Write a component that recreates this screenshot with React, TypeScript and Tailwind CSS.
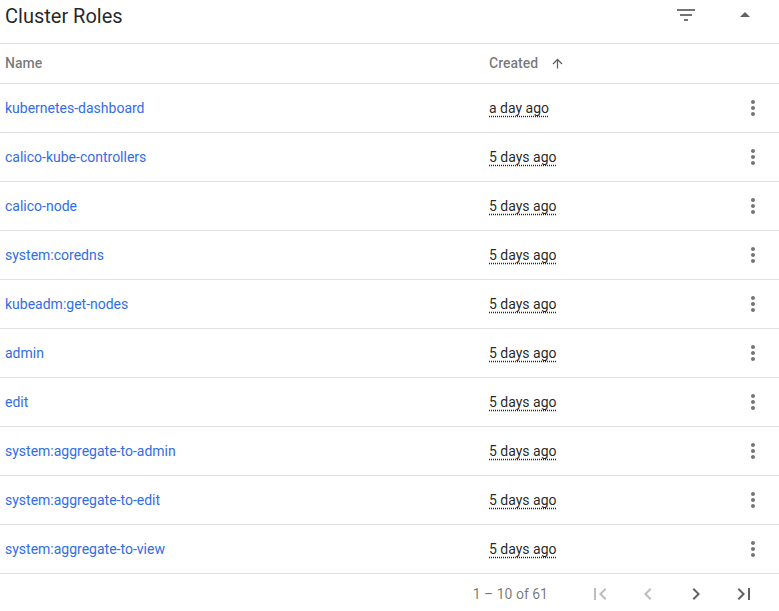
const ROWS = [
  { name: "kubernetes-dashboard", created: "a day ago" },
  { name: "calico-kube-controllers", created: "5 days ago" },
  { name: "calico-node", created: "5 days ago" },
  { name: "system:coredns", created: "5 days ago" },
  { name: "kubeadm:get-nodes", created: "5 days ago" },
  { name: "admin", created: "5 days ago" },
  { name: "edit", created: "5 days ago" },
  { name: "system:aggregate-to-admin", created: "5 days ago" },
  { name: "system:aggregate-to-edit", created: "5 days ago" },
  { name: "system:aggregate-to-view", created: "5 days ago" },
];

// material icon paths
const ICONS = {
  first: "M18.41 16.59L13.82 12l4.59-4.59L17 6l-6 6 6 6zM6 6h2v12H6z",
  prev: "M15.41 7.41L14 6l-6 6 6 6 1.41-1.41L10.83 12z",
  next: "M10 6L8.59 7.41 13.17 12l-4.58 4.59L10 18l6-6z",
  last: "M5.59 7.41L10.18 12l-4.59 4.59L7 18l6-6-6-6zM16 6h2v12h-2z",
};

function Icon({ d, className, size = 24 }: { d: string; className: string; size?: number }) {
  return (
    <svg width={size} height={size} viewBox="0 0 24 24" className={className}>
      <path d={d} />
    </svg>
  );
}

export default function App() {
  return (
    <div className="w-[779px] h-[611px] bg-white font-['Roboto',sans-serif] overflow-hidden">
      {/* card header */}
      <div className="flex h-[44px] items-center border-b border-[#e0e0e0] pl-[5px]">
        <h1 className="flex-1 text-[20px] leading-none text-[#000000de] -mt-[12px]">Cluster Roles</h1>
        <button type="button" className="mr-[35px] -mt-[13px] flex h-6 w-6 items-center justify-center">
          <Icon d="M10 18h4v-2h-4v2zM3 6v2h18V6H3zm3 7h12v-2H6v2z" className="fill-[#757575]" />
        </button>
        <button type="button" className="mr-[22px] -mt-[13px] flex h-6 w-6 items-center justify-center">
          <Icon d="M7 14l5-5 5 5z" className="fill-[#616161]" />
        </button>
      </div>

      {/* column headers */}
      <div className="flex h-[40px] items-center border-b border-[#e0e0e0] text-[14px] font-medium text-[#0000008a]">
        <div className="w-[489px] pl-[5px]">Name</div>
        <div className="flex items-center gap-[12px]">
          <span>Created</span>
          <Icon d="M4 12l1.41 1.41L11 7.83V20h2V7.83l5.58 5.59L20 12l-8-8-8 8z" className="fill-[#616161]" size={15} />
        </div>
      </div>

      {ROWS.map((r) => (
        <div key={r.name} className="flex h-[49px] items-center border-b border-[#e0e0e0] text-[14px]">
          <a className="w-[489px] pl-[5px] text-[#326de6]">{r.name}</a>
          <span className="flex-1 text-[#000000de] underline decoration-dotted underline-offset-[3px]">{r.created}</span>
          <span className="mr-[14px]">
            <Icon
              d="M12 8c1.1 0 2-.9 2-2s-.9-2-2-2-2 .9-2 2 .9 2 2 2zm0 2c-1.1 0-2 .9-2 2s.9 2 2 2 2-.9 2-2-.9-2-2-2zm0 6c-1.1 0-2 .9-2 2s.9 2 2 2 2-.9 2-2-.9-2-2-2z"
              className="fill-[#757575]"
            />
          </span>
        </div>
      ))}

      {/* paginator */}
      <div className="flex h-[40px] items-center justify-end text-[14px] text-[#0000008a]">
        <span className="mr-[40px]">1 – 10 of 61</span>
        <div className="flex items-center gap-[24px] pr-[23px]">
          <Icon d={ICONS.first} className="fill-[#bdbdbd]" />
          <Icon d={ICONS.prev} className="fill-[#bdbdbd]" />
          <Icon d={ICONS.next} className="fill-[#616161]" />
          <Icon d={ICONS.last} className="fill-[#616161]" />
        </div>
      </div>
    </div>
  );
}
